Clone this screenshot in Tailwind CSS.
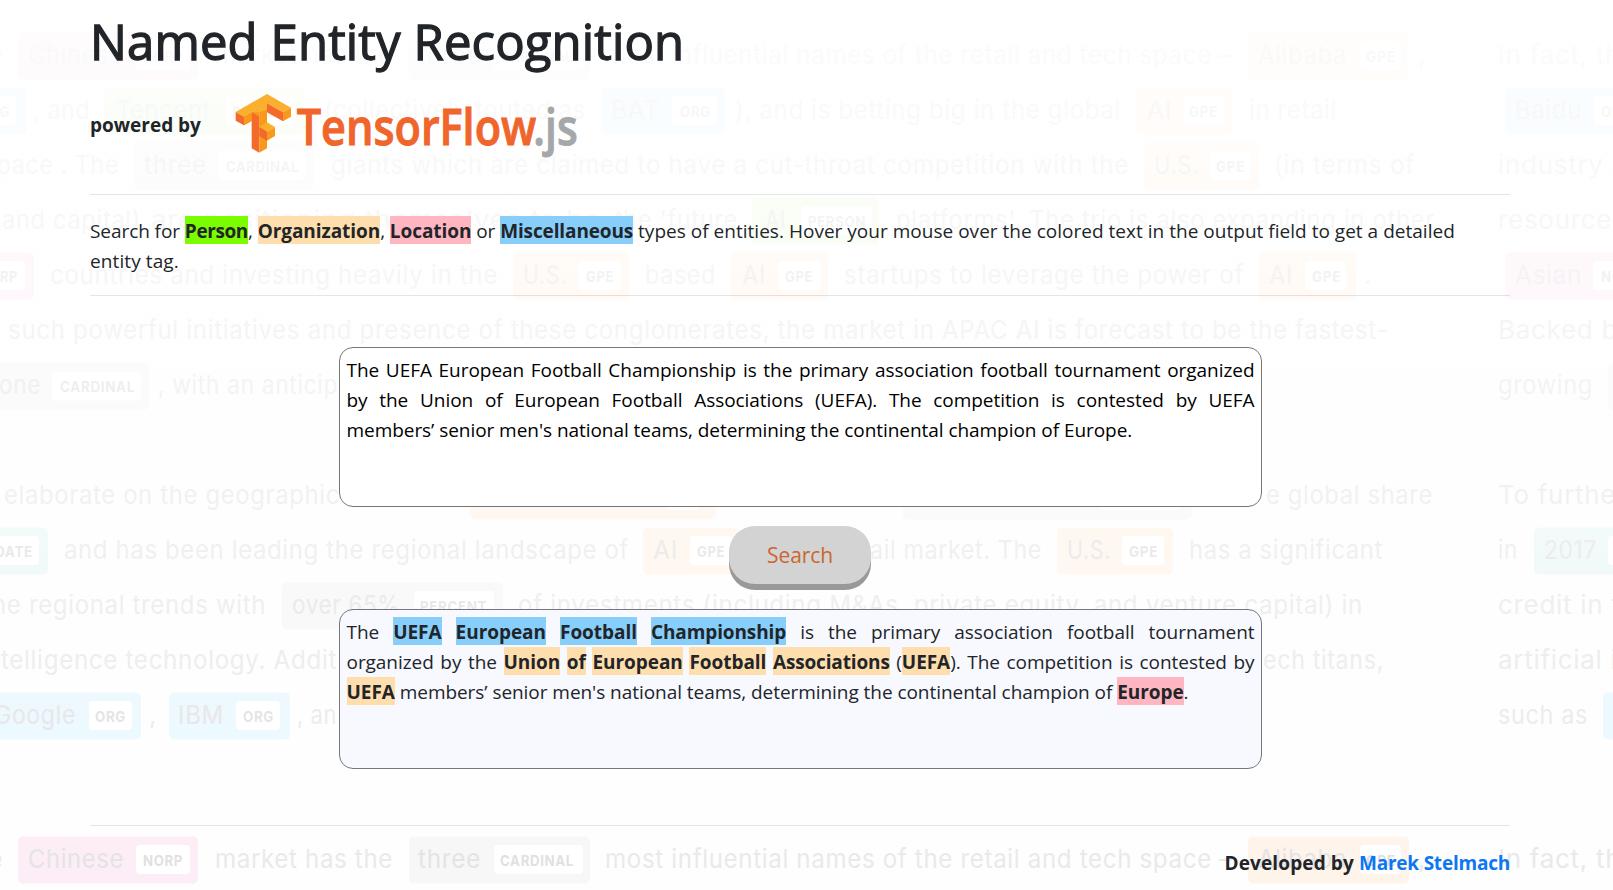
<!DOCTYPE html>
<html lang="en">
<head>
<meta charset="utf-8">
<title>Named Entity Recognition</title>
<script src="https://cdn.jsdelivr.net/npm/@tailwindcss/browser@4"></script>
</head>
<body class="relative h-[890px] overflow-hidden bg-white font-['Open_Sans',sans-serif] text-[19px] leading-[30px] tracking-[-0.05px] text-[#212529]">

<!-- decorative annotated-text backdrop -->
<svg id="backdrop" class="absolute inset-0 -z-0 font-['Inter',sans-serif]" width="1613" height="890" viewBox="0 0 1613 890" aria-hidden="true">
  <defs>
    <linearGradient id="fade" x1="0" y1="0" x2="0" y2="1">
      <stop offset="0" stop-color="#fff" stop-opacity=".86"/>
      <stop offset=".3" stop-color="#fff" stop-opacity=".6"/>
      <stop offset="1" stop-color="#fff" stop-opacity="0"/>
    </linearGradient>
  </defs>
  <rect width="1613" height="890" fill="#fefefe"/>
  <g id="art"></g>
  <rect width="1613" height="890" fill="url(#fade)"/>
</svg>

<main class="relative mx-[90px] flex w-[1420px] flex-col pt-[11px]">
  <h1 class="text-[49px] font-normal leading-[60px] tracking-[0.15px] [-webkit-text-stroke:1.3px_#212529]">Named Entity Recognition</h1>

  <div class="mt-[22px] flex h-16 items-center">
    <b class="w-[145px] tracking-normal">powered by</b>
    <svg class="h-16 w-[344px] overflow-visible" viewBox="45 40 1032 192">
      <path fill="#fbb02d" d="M47 97 141 43 213 84 189 98 141 71 141 126 118 140 118 84 72 111z"/>
      <path fill="#f26b2a" d="M47 97 72 111 72 137 47 123z"/>
      <path fill="#f9981d" d="M72 111 118 84 118 111 72 137z"/>
      <path fill="#f26b2a" d="M95 97 118 111 118 219 95 206z"/>
      <path fill="#f9981d" d="M118 98 141 71 141 206 118 219z"/>
      <path fill="#fbb02d" d="M72 111 118 84 141 71 141 90 118 98 95 98z"/>
      <path fill="#f9981d" d="M72 111 95 98 95 124 72 137z"/>
      <path fill="#f26b2a" d="M141 71 189 98 189 125 141 98z"/>
      <path fill="#f9981d" d="M189 98 213 84 213 111 189 125z"/>
      <path fill="#fbb02d" d="M118 142 141 128 165 142 141 156z"/>
      <path fill="#f26b2a" d="M118 142 141 156 141 183 118 170z"/>
      <path fill="#f9981d" d="M141 156 165 142 165 169 141 183z"/>
      <g class="font-['Open_Sans',sans-serif] font-semibold" font-size="152" letter-spacing="0" stroke-width="3">
        <text x="230" y="196" fill="#f0652b" stroke="#f0652b" textLength="719" lengthAdjust="spacingAndGlyphs">TensorFlow</text>
        <text x="940" y="196" fill="#a5a7a9" stroke="#a5a7a9" textLength="133" lengthAdjust="spacingAndGlyphs">.js</text>
      </g>
    </svg>
  </div>

  <hr class="mt-[37px] border-black/10">

  <p class="mt-[21px] h-[60px] tracking-[-0.07px]">Search for <b class="bg-[#7cfc00] pt-0.5 tracking-[-0.4px]">Person</b>, <b class="bg-[#ffdead] pt-0.5">Organization</b>, <b class="bg-[#ffb6c1] pt-0.5">Location</b> or <b class="bg-[#87cefa] pt-0.5 tracking-[-0.12px]">Miscellaneous</b> <span class="tracking-[0.02px]">types of entities. Hover your mouse over the colored text in the output field to get a detailed</span><br><span class="tracking-[0.1px]">entity tag.</span></p>

  <hr class="mt-[19px] border-black/10">

  <div class="mt-[51px] h-40 w-[923px] self-center rounded-[14px] border border-[#767676] bg-white py-[7px] pl-[7px] pr-1.5 text-black">
    <div class="[text-align-last:justify]">The UEFA European Football Championship is the primary association football tournament organized</div>
    <div class="[text-align-last:justify]">by the Union of European Football Associations (UEFA). The competition is contested by UEFA</div>
    <div>members’ senior men's national teams, determining the continental champion of Europe.</div>
  </div>

  <button class="mt-[19px] h-[58px] w-[142px] self-center rounded-[26px] bg-[#d3d3d3] text-[21px] tracking-[-0.1px] text-[#cb6630] shadow-[0_6px_0_#999]">Search</button>

  <div class="mt-[25px] h-40 w-[923px] self-center rounded-[14px] border border-[#767680] bg-[#f8f8ff] py-[7px] pl-[7px] pr-1.5">
    <div class="[text-align-last:justify]">The <b class="bg-[#87cefa] pt-0.5">UEFA</b> <b class="bg-[#87cefa] pt-0.5">European</b> <b class="bg-[#87cefa] pt-0.5">Football</b> <b class="bg-[#87cefa] pt-0.5 tracking-[-0.12px]">Championship</b> is the primary association football tournament</div>
    <div class="[text-align-last:justify]">organized by the <b class="bg-[#ffdead] pt-0.5">Union</b> <b class="bg-[#ffdead] pt-0.5">of</b> <b class="bg-[#ffdead] pt-0.5">European</b> <b class="bg-[#ffdead] pt-0.5">Football</b> <b class="bg-[#ffdead] pt-0.5 tracking-[-0.15px]">Associations</b> (<b class="bg-[#ffdead] pt-0.5">UEFA</b>). The competition is contested by</div>
    <div><b class="bg-[#ffdead] pt-0.5">UEFA</b> members’ senior men's national teams, determining the continental champion of <b class="bg-[#ffb6c1] pt-0.5">Europe</b>.</div>
  </div>

  <hr class="mt-[56px] border-black/10">

  <footer class="mt-[22px] self-end font-bold tracking-[0.12px]">Developed by <a class="tracking-[-0.22px] text-[#0d77f2]">Marek Stelmach</a></footer>
</main>

<script>
const C = {pink:'#fdedf6', gray:'#f7f7f7', orange:'#fff4ea', green:'#f0fbe4', blue:'#e9f8fe', teal:'#ebf8f7'};
// Each row: baseline, then plain runs [text, start, end] and chips [colour, left, right, text, x1, x2, boxLeft, boxRight, label, l1, l2].
// An end of 0 leaves the run at its natural width.
const rows = [
 [63.5, ['e',-11,3], ['pink',18,198,'Chinese',28,124,136,190,'NORP',143,183], ['market has the',215,393], ['gray',409,590,'three',418,481,494,583,'CARDINAL',500,574], ['most influential names of the retail and tech space –',605,1232], ['orange',1248,1409,'Alibaba',1258,1347,1360,1401,'GPE',1366,1396], [',',1418,0], ['In fact, the',1498,0]],
 [118.5, ['blue',-90,26,'BAT',-81,-33,-28,16,'ORG',-20,10], [', and',33,90], ['green',104,304,'Tencent',116,211,226,295,'PERSON',232,289], ['(collectively touted as',324,586], ['blue',602,725,'BAT',611,660,672,717,'ORG',680,711], ['), and is betting big in the global',735,1121], ['orange',1137,1233,'AI',1147,1172,1184,1224,'GPE',1189,1218], ['in retail',1249,1337], ['blue',1505,1700,'Baidu',1515,1582,1594,1640,'ORG',1601,1632]],
 [173.5, ['space . The',-16,119], ['gray',134,314,'three',144,207,219,306,'CARDINAL',226,299], ['giants which are claimed to have a cut-throat competition with the',331,1129], ['orange',1144,1259,'U.S.',1154,1199,1210,1251,'GPE',1216,1245], ['(in terms of',1274,1415], ['industry segments',1498,0]],
 [228.5, ['and capital)',2,141], ['are positioning themselves to be',151,601], ["the 'future",615,738], ['green',752,879,'AI',765,786,801,872,'PERSON',808,866], ["platforms'. The trio is also expanding in other",896,1435], ['resources',1498,0]],
 [283.5, ['pink',-120,34,'Asian',-110,-50,-30,25,'NORP',-21,18], ['countries and investing heavily in the',50,498], ['orange',513,629,'U.S.',523,567,578,621,'GPE',586,614], ['based',645,716], ['orange',731,828,'AI',742,766,778,821,'GPE',785,813], ['startups to leverage the power of',844,1244], ['orange',1259,1356,'AI',1269,1293,1305,1346,'GPE',1312,1341], ['.',1364,0], ['pink',1505,1700,'Asian',1515,1582,1593,1650,'NORP',1601,1641]],
 [338.5, ['such powerful initiatives and presence of these conglomerates, the market in APAC AI is forecast to be the fastest-',8,1388], ['Backed by',1498,0]],
 [394, ['gray',-40,149,'one',-1,41,52,141,'CARDINAL',60,135], [', with an anticip',158,338], ['growing',1498,1593], ['gray',1608,1700,'',0,0,1670,1690,'',0,0]],
 [503.5, ['elaborate on the geographic',4,340], ['orange',470,716,'',0,0,667,698,'',0,0], ['gray',903,1192,'',0,0,1100,1180,'',0,0], ['e global share',1266,1433], ['To further',1498,0]],
 [558.5, ['teal',-80,48,'',0,0,-12,39,'DATE',-5,33], ['and has been leading the regional landscape of',64,629], ['orange',643,740,'AI',653,678,690,732,'GPE',697,725], ['ail market. The',870,1042], ['orange',1057,1173,'U.S.',1067,1111,1122,1164,'GPE',1129,1158], ['has a significant',1189,1383], ['in',1498,1518], ['teal',1534,1700,'2017',1544,1597,1608,1660,'',0,0]],
 [613.5, ['he regional trends with',-8,266], ['gray',282,503,'over 65%',292,400,414,494,'PERCENT',420,487], ['of investments (including M&As, private equity, and venture capital) in',518,1363], ['credit in the',1498,0]],
 [668.5, ['telligence technology. Addit',1,337], ['ech titans,',1263,1384], ['artificial in',1498,0]],
 [723.5, ['blue',-40,141,'Google',-6,76,89,132,'ORG',95,126], [',',149,0], ['blue',169,290,'IBM',178,224,236,280,'ORG',243,274], [', an',297,337], ['such as',1498,1588], ['blue',1603,1700,'',0,0,1690,1700,'',0,0]]
];
rows.push([867.5, ...rows[0].slice(1)]);
const art = document.getElementById('art');
const NS = 'http://www.w3.org/2000/svg';
function add(tag, attrs, text) {
  const n = document.createElementNS(NS, tag);
  for (const k in attrs) n.setAttribute(k, attrs[k]);
  if (text) n.textContent = text;
  art.append(n);
}
function run(s, x1, x2, y, size, fill, weight) {
  const a = {x:x1, y, 'font-size':size, fill, 'font-weight':weight, 'letter-spacing':.7};
  if (x2) { a.textLength = x2 - x1; a.lengthAdjust = 'spacingAndGlyphs'; }
  add('text', a, s);
}
for (const [y, ...items] of rows) for (const i of items) {
  if (i.length === 3) { run(i[0], i[1], i[2], y, 26, '#e9e9ea', 400); continue; }
  const [c, l, r, s, x1, x2, bl, br, lab, l1, l2] = i;
  add('rect', {x:l, y:y-31, width:r-l, height:47, rx:5, fill:C[c]});
  if (s) run(s, x1, x2, y, 26, '#e4e2e5', 400);
  add('rect', {x:bl, y:y-22.5, width:br-bl, height:29, rx:4, fill:'#fff'});
  if (lab) run(lab, l1, l2, y-2, 14.5, '#dfdfe1', 700);
}
</script>
</body>
</html>
